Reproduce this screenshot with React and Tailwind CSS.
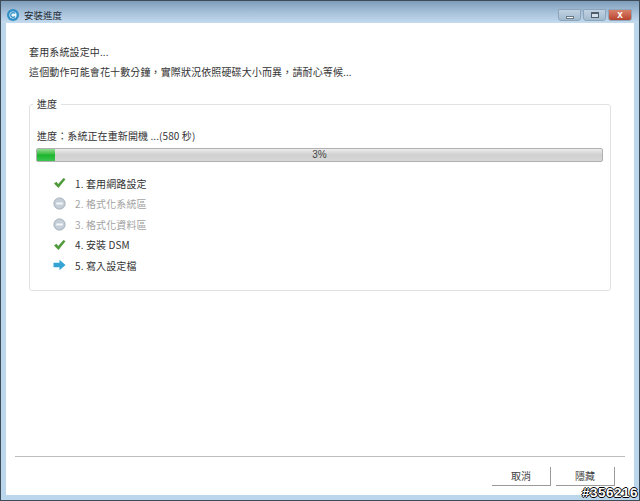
import React from "react";

const font = { fontFamily: '"Noto Sans CJK TC", "Liberation Sans", sans-serif' };

function Check() {
  return (
    <svg width="13" height="12" viewBox="0 0 13 12">
      <path d="M1 6.5 L3.5 4.8 L5.2 7 L10.5 1 L12.5 2.2 L5.4 11 Z" fill="#4f9a3a" />
    </svg>
  );
}
function Skip() {
  return (
    <svg width="13" height="13" viewBox="0 0 13 13">
      <circle cx="6.5" cy="6.5" r="5.6" fill="#c3ced8" stroke="#a3aeb9" />
      <rect x="3.2" y="5.5" width="6.6" height="2" fill="#f4f6f8" />
    </svg>
  );
}
function Arrow() {
  return (
    <svg width="13" height="12" viewBox="0 0 13 12">
      <path d="M0.5 3.8 H6.5 V0.8 L12.5 6 L6.5 11.2 V8.2 H0.5 Z" fill="#35a4d4" />
    </svg>
  );
}

function Step({ icon, children, muted }) {
  return (
    <div className={"flex items-center h-[20.5px] " + (muted ? "text-[#a3a3a3]" : "text-[#333]")}>
      <span className="w-[13px] h-[13px] flex items-center justify-center">{icon}</span>
      <span className="ml-[9px] text-[10px] tracking-[0.12px]">{children}</span>
    </div>
  );
}

function CaptionBtn({ className, children }) {
  return (
    <div className={"h-[12px] flex justify-center border border-[#8ea4b8] rounded-b-[3px] " + className}>
      {children}
    </div>
  );
}

export default function App() {
  return (
    <div style={font} className="w-[640px] h-[501px] relative overflow-hidden bg-[#bcd6ec] border border-[#3c4c58] flex flex-col text-[#333]">
      <div className="h-[22px] shrink-0 flex items-start justify-between bg-gradient-to-b from-[#7f9db9] via-[#a4bfd8] to-[#c4dbef]">
        <div className="flex items-center h-[28px] pl-[6px]">
          <svg width="12" height="12" viewBox="0 0 12 12">
            <circle cx="6" cy="6" r="6" fill="#2f8fc6" />
            <circle cx="6" cy="6" r="3.6" fill="#eaf6fc" />
            <path d="M8 4.5 A2.4 2.4 0 1 0 8 7.5" fill="none" stroke="#2f8fc6" strokeWidth="1.3" />
          </svg>
          <span className="ml-[5px] text-[9.5px] text-[#1f2a33]">安裝進度</span>
        </div>
        <div className="flex gap-[2px] pr-[7px] pt-[8px]">
          <CaptionBtn className="w-[23px] bg-gradient-to-b from-[#c0d2e2] to-[#a3bbcf] items-end pb-[1px]">
            <div className="w-[8px] h-[3px] bg-[#f2f5f8] border border-[#6a7a86]" />
          </CaptionBtn>
          <CaptionBtn className="w-[23px] bg-gradient-to-b from-[#c0d2e2] to-[#a3bbcf] items-center">
            <div className="w-[8px] h-[6px] border border-t-2 border-[#4f5e6a] bg-[#d5e0ea]" />
          </CaptionBtn>
          <CaptionBtn className="w-[24px] border-[#8a3a2c] bg-gradient-to-b from-[#d8806a] to-[#b8432e] items-center">
            <span className="text-white text-[10px] font-bold leading-none" style={{ fontFamily: '"Liberation Sans", sans-serif' }}>x</span>
          </CaptionBtn>
        </div>
      </div>

      <div className="mx-[5px] mb-[5px] flex-1 bg-white flex flex-col px-[23px]">
        <div className="pt-[19px] text-[10px] leading-[20px] tracking-[0.13px]">
          <p>套用系統設定中...</p>
          <p>這個動作可能會花十數分鐘，實際狀況依照硬碟大小而異，請耐心等候...</p>
        </div>

        <div className="relative mt-[22px] h-[187px] border border-[#e2e2e2] rounded-[3px] pl-[6px] pr-[7px] pt-[24px]">
          <span className="absolute left-[3px] top-[-8px] bg-white px-[4px] text-[10px] leading-[14px]">進度</span>
          <p className="pl-[1px] text-[10px] leading-[14px] tracking-[0.1px]">進度：系統正在重新開機 ...(580 秒)</p>
          <div className="relative mt-[5px] h-[14px] border border-[#b0b0b0] rounded-[2px] bg-gradient-to-b from-[#ededed] via-[#cfcfcf] to-[#d8d8d8] flex items-center justify-center">
            <div className="absolute left-0 top-0 bottom-0 w-[18px] bg-gradient-to-b from-[#8fdc8f] via-[#17b62e] to-[#3dc34f]" />
            <span className="relative text-[10px] leading-none text-[#444]" style={{ fontFamily: '"Liberation Sans", sans-serif' }}>3%</span>
          </div>
          <div className="mt-[11px] pl-[17px]">
            <Step icon={<Check />}>1. 套用網路設定</Step>
            <Step icon={<Skip />} muted>2. 格式化系統區</Step>
            <Step icon={<Skip />} muted>3. 格式化資料區</Step>
            <Step icon={<Check />}>4. 安裝 DSM</Step>
            <Step icon={<Arrow />}>5. 寫入設定檔</Step>
          </div>
        </div>

        <div className="flex-1" />

        <div className="-mx-[14px] border-t border-[#bdbdbd]" />
        <div className="flex justify-end gap-[5px] pt-[10px] pb-[9px] -mr-[4px]">
          <button className="w-[59px] h-[19px] text-[10px] leading-none text-[#444] border-r border-b border-[#9a9a9a] bg-white">取消</button>
          <button className="w-[59px] h-[19px] text-[10px] leading-none text-[#444] border-r border-b border-[#9a9a9a] bg-white">隱藏</button>
        </div>
      </div>

      <div className="absolute right-[1px] bottom-0 text-[13.5px] font-bold leading-[14px] tracking-[0.5px] text-white" style={{ fontFamily: '"Liberation Sans", sans-serif', textShadow: "1px 0 0 #000,-1px 0 0 #000,0 1px 0 #000,0 -1px 0 #000" }}>#356216</div>
    </div>
  );
}
